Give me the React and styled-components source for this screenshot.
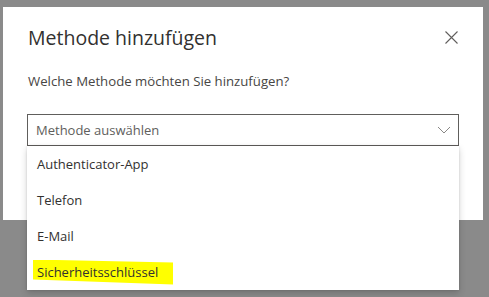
import React from "react";
import styled, { createGlobalStyle } from "styled-components";

const Global = createGlobalStyle`
  body {
    margin: 0;
    background: #8a8a8a;
    font-family: "Open Sans", "Noto Sans", sans-serif;
  }
`;

const Page = styled.div`
  width: 489px;
  height: 297px;
  padding: 7px 0 0 3px;
  box-sizing: border-box;
  overflow: hidden;
`;

const Dialog = styled.div`
  position: relative;
  width: 480px;
  height: 213px;
  background: #fff;
  box-sizing: border-box;
  padding: 12px 24px 0 24px;
  display: flex;
  flex-direction: column;
`;

const Header = styled.div`
  display: flex;
  align-items: center;
  justify-content: space-between;
  height: 36px;
`;

const Title = styled.h1`
  margin: 0 0 0 1px;
  font-size: 19.5px;
  font-weight: 400;
  color: #323130;
`;

const Close = styled.button`
  border: 0;
  background: none;
  padding: 0;
  width: 13px;
  height: 13px;
  margin-right: 1px;
  display: flex;
  color: #605e5c;
`;

const Subtitle = styled.p`
  margin: 16px 0 0 1px;
  font-size: 13.2px;
  line-height: 20px;
  color: #484644;
`;

const Select = styled.div`
  margin-top: 23px;
  width: 432px;
  height: 32px;
  box-sizing: border-box;
  border: 1px solid #605e5c;
  display: flex;
  align-items: center;
  justify-content: space-between;
  padding: 0 7px 0 8px;
  font-size: 13px;
  color: #605e5c;
`;

const Menu = styled.ul`
  position: absolute;
  left: 24px;
  top: 139px;
  width: 432px;
  margin: 0;
  padding: 0;
  list-style: none;
  background: #fff;
  box-shadow: 0 3px 7px rgba(0, 0, 0, 0.18), 0 0 2px rgba(0, 0, 0, 0.12);
`;

const Item = styled.li`
  height: 36px;
  display: flex;
  align-items: center;
  padding-left: 10px;
  font-size: 13px;
  color: #323130;
`;

const Marker = styled.span`
  margin-left: -4px;
  padding: 3px 15px 4px 4px;
  background: #ffff00;
  clip-path: polygon(0 0, 100% 12%, 100% 100%, 0 80%);
`;

export default function App() {
  const options = ["Authenticator-App", "Telefon", "E-Mail"];
  return (
    <>
      <Global />
      <Page>
        <Dialog>
          <Header>
            <Title>Methode hinzufügen</Title>
            <Close aria-label="Schließen">
              <svg width="13" height="13" viewBox="0 0 13 13">
                <path d="M0.5 0.5L12.5 12.5M12.5 0.5L0.5 12.5" stroke="#605e5c" strokeWidth="1.1" fill="none" />
              </svg>
            </Close>
          </Header>
          <Subtitle>Welche Methode möchten Sie hinzufügen?</Subtitle>
          <Select>
            <span>Methode auswählen</span>
            <svg width="14" height="8" viewBox="0 0 14 8">
              <path d="M1 1L7 7L13 1" stroke="#8a8886" strokeWidth="1" fill="none" />
            </svg>
          </Select>
          <Menu>
            {options.map((o) => (
              <Item key={o}>{o}</Item>
            ))}
            <Item>
              <Marker>Sicherheitsschlüssel</Marker>
            </Item>
          </Menu>
        </Dialog>
      </Page>
    </>
  );
}
